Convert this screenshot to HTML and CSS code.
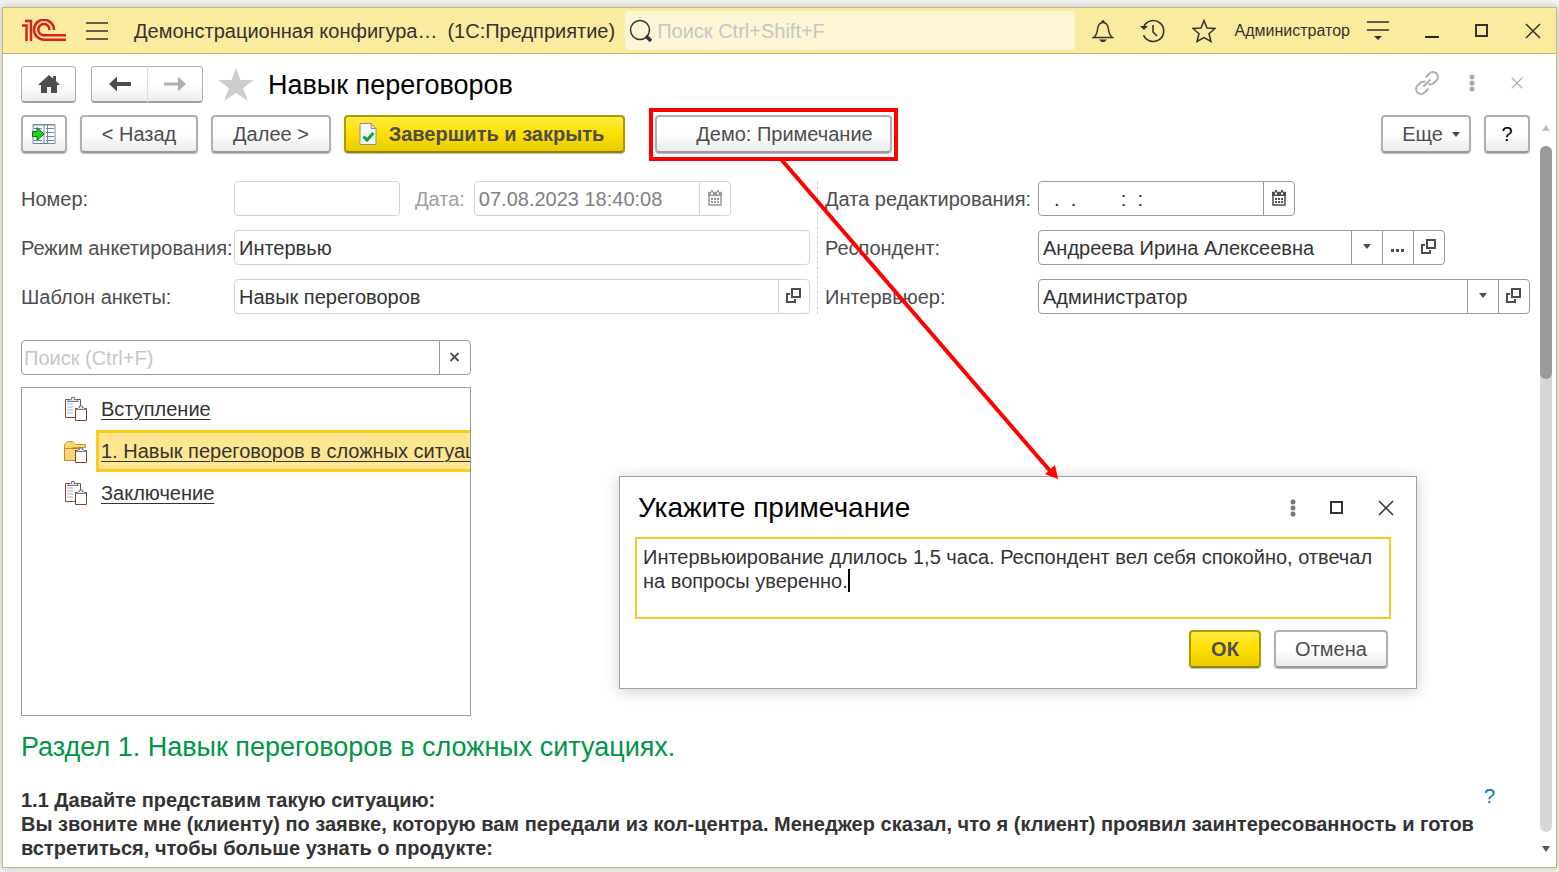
FILE: index.html
```html
<!DOCTYPE html>
<html lang="ru">
<head>
<meta charset="utf-8">
<title>Навык переговоров</title>
<link rel="stylesheet" href="styles.css">
</head>
<body>
<svg class="defs" width="0" height="0" aria-hidden="true">
  <defs>
    <symbol id="calendar" viewBox="0 0 14 16">
      <path d="M1 2.500h12V15H1z" fill="none" stroke="currentColor" stroke-width="1.500"/>
      <path d="M0 2h14v4H0zM3 0h2v3H3zM9 0h2v3H9z" fill="currentColor"/>
      <path d="M3 2.500h2v2H3zM9 2.500h2v2H9z" fill="#fff"/>
      <path d="M3 8h2v2H3zM6 8h2v2H6zM9 8h2v2H9zM3 11h2v2H3zM6 11h2v2H6zM9 11h2v2H9z" fill="currentColor"/>
    </symbol>
    <symbol id="open" viewBox="0 0 16 16">
      <path d="M6 1h8v8H6z" fill="none" stroke="currentColor" stroke-width="2"/>
      <path d="M4 6H1v8h8v-3" fill="none" stroke="currentColor" stroke-width="2"/>
    </symbol>
    <symbol id="caret" viewBox="0 0 8 5"><path d="M0 0h8L4 5z" fill="currentColor"/></symbol>
    <symbol id="cross" viewBox="0 0 16 16"><path d="M1 1l14 14M15 1L1 15" fill="none" stroke="currentColor" stroke-width="1.500"/></symbol>
    <symbol id="square" viewBox="0 0 14 14"><path d="M1 1h11v11H1z" fill="none" stroke="currentColor" stroke-width="2"/></symbol>
    <symbol id="dots" viewBox="0 0 6 18"><g fill="currentColor"><circle cx="3" cy="3" r="2.500"/><circle cx="3" cy="9" r="2.500"/><circle cx="3" cy="15" r="2.500"/></g></symbol>
    <symbol id="sheet" viewBox="0 0 24 24">
      <path d="M1.500 2.500h15v18h-15z" fill="#fdfdfd" stroke="#8a4a38"/>
      <path d="M3 7h6M3 10h6M3 13h6M3 16h6" stroke="#c4cad6" stroke-width="1.500"/>
      <path d="M3.500 4.500l2-2h2V.5h3v2h2l2 2z" fill="#dfe4ea" stroke="#747d8c"/>
      <path d="M11.500 11.500h11v12h-11z" fill="#fff" stroke="#87401f"/>
      <path d="M12.500 12.500l2-2h1V9h3v1.500h1l2 2z" fill="#dfe4ea" stroke="#747d8c"/>
    </symbol>
    <symbol id="folder" viewBox="0 0 24 24">
      <path d="M.5 21.500V5.500l3-3h5l3 3h10v3H9v13z" fill="#fbd764" stroke="#c79237"/>
      <path d="M.5 9.500h18v12H.5z" fill="#f8d77a" stroke="#c08a35"/>
      <path d="M11.500 11.500h11v12h-11z" fill="#fff" stroke="#87401f"/>
      <path d="M12.500 12.500l2-2h1V9h3v1.500h1l2 2z" fill="#dfe4ea" stroke="#747d8c"/>
    </symbol>
  </defs>
</svg>

<div class="window">
  <header class="titlebar">
    <svg class="logo" width="46" height="24" viewBox="0 0 46 24" role="img" aria-label="1С">
      <g fill="none" stroke="#d8201f" stroke-width="2.500">
        <path d="M1 6.500h4.500V22M4 2h6V22"/>
        <path d="M33 11A10 10 0 1 0 23 20.700H45"/>
        <path d="M28.500 11A5.600 5.600 0 1 0 23 16.300H45"/>
      </g>
    </svg>
    <button class="icon-btn menu" aria-label="Меню"><svg width="22" height="18" viewBox="0 0 22 18"><path d="M0 1h22M0 9h22M0 17h22" stroke="#333" stroke-width="1.500"/></svg></button>
    <span class="app-name">Демонстрационная конфигура…</span>
    <span class="app-kind">(1С:Предприятие)</span>
    <label class="global-search">
      <svg width="24" height="24" viewBox="0 0 24 24" fill="none" stroke="#333"><circle cx="11" cy="11" r="9.500" stroke-width="1.500"/><path d="M17 17l5 5" stroke-width="3.500"/></svg>
      <input type="text" placeholder="Поиск Ctrl+Shift+F" aria-label="Поиск">
    </label>
    <div class="title-tools">
      <button class="icon-btn" aria-label="Уведомления"><svg width="22" height="24" viewBox="0 0 22 24"><path d="M1.500 18.500c3-2 3.500-4 4-8C6 6 8 3.500 11 3.500S16 6 16.500 10.500c.5 4 1 6 4 8z" fill="none" stroke="#333" stroke-width="1.500"/><circle cx="11" cy="2.500" r="1.500" fill="#333"/><path d="M7 20.500h8l-2.500 2.500h-3z" fill="#333"/></svg></button>
      <button class="icon-btn" aria-label="История"><svg width="26" height="24" viewBox="0 0 26 24"><path d="M4 7A10.500 10.500 0 1 1 3.500 16M13 6v7l4 4" fill="none" stroke="#333" stroke-width="1.600"/><path d="M0 7h8L4 11z" fill="#333"/></svg></button>
      <button class="icon-btn" aria-label="Избранное"><svg width="24" height="24" viewBox="0 0 24 24"><path d="M12 1.500l3 7.500 8 .5-6 5.300 2 7.700-7-4-7 4 2-7.700-6-5.300 8-.5z" fill="none" stroke="#333" stroke-width="1.500"/></svg></button>
      <a class="user" href="#">Администратор</a>
      <button class="icon-btn" aria-label="Настройки"><svg width="22" height="20" viewBox="0 0 22 20"><path d="M0 1h22M0 9h22" stroke="#333" stroke-width="1.500"/><path d="M7 15h8l-4 4z" fill="#333"/></svg></button>
      <button class="icon-btn win" aria-label="Свернуть"><svg width="14" height="14" viewBox="0 0 14 14"><path d="M0 13h14" stroke="#222" stroke-width="2"/></svg></button>
      <button class="icon-btn win" aria-label="Развернуть"><svg width="14" height="14"><use href="#square"/></svg></button>
      <button class="icon-btn win" aria-label="Закрыть"><svg width="16" height="16"><use href="#cross"/></svg></button>
    </div>
  </header>

  <div class="page-head">
    <button class="nav-btn home" aria-label="Домой"><svg width="22" height="18" viewBox="0 0 22 18"><path d="M11 0L0 10h3v8h6v-6h4v6h6v-8h3l-4-4V1h-3v2.500z" fill="#4d4d4d"/></svg></button>
    <div class="nav-pair">
      <button class="nav-btn" aria-label="Назад"><svg width="22" height="16" viewBox="0 0 22 16"><path d="M0 8l8-7.500V6h14v4H8v5.500z" fill="#4d4d4d"/></svg></button>
      <button class="nav-btn" aria-label="Вперед"><svg width="22" height="16" viewBox="0 0 22 16"><path d="M22 8l-8-7.500V6.500H0v3h14v6z" fill="#b0b0b0"/></svg></button>
    </div>
    <svg class="fav" width="36" height="34" viewBox="0 0 36 34"><path d="M18 0l4.500 12H36L25 20l5 13-12-8-12 8 5-13L0 12h13.500z" fill="#cbcdcf"/></svg>
    <h1 class="title">Навык переговоров</h1>
    <div class="head-tools">
      <button class="icon-btn" aria-label="Ссылка"><svg width="24" height="24" viewBox="0 0 24 24" fill="none" stroke="#b0b0b0" stroke-width="2"><path d="M10.500 6.500l4-4c2-2 5-2 7 0s2 5 0 7l-4 3.500-4 .5M13.500 17.500l-4 4c-2 2-5 2-7 0s-2-5 0-7l4-3.500 4-.5M8.500 15.500l7-7"/></svg></button>
      <button class="icon-btn" aria-label="Еще"><svg width="6" height="18"><use href="#dots"/></svg></button>
      <button class="icon-btn close" aria-label="Закрыть форму"><svg width="12" height="12"><use href="#cross"/></svg></button>
    </div>
  </div>

  <div class="body">
    <main class="form">
      <div class="toolbar">
        <button class="btn square" aria-label="Показать в списке"><svg width="24" height="22" viewBox="0 0 24 22"><path d="M1 1.500h22v19H1z" fill="#fff" stroke="#7488a5"/><path d="M1 2h22M12 1v20M14 5.500h8M14 9.500h8M14 13.500h8M14 17.500h8M2 5.500h8M2 17.500h8M15.500 2v18" stroke="#7488a5"/><path d="M.5 8.500H5v-4l7 6.500-7 6.500v-4H.5z" fill="#1fd01f" stroke="#17691a"/></svg></button>
        <button class="btn back">&lt; Назад</button>
        <button class="btn next">Далее &gt;</button>
        <button class="btn primary finish"><svg width="18" height="22" viewBox="0 0 18 22"><path d="M1 .5h11l5 5v16H1z" fill="#f4faf7" stroke="#8b9098"/><path d="M12 .5v5h5z" fill="#ffe77a" stroke="#8b9098"/><path d="M4.500 13.500l3.500 3.500 6.500-7" fill="none" stroke="#0fa32a" stroke-width="3"/></svg>Завершить и закрыть</button>
        <button class="btn demo">Демо: Примечание</button>
        <button class="btn more">Еще<svg width="8" height="5"><use href="#caret"/></svg></button>
        <button class="btn square help">?</button>
      </div>

      <div class="fields">
        <div class="group">
          <div class="row">
            <label class="label" for="num">Номер:</label>
            <div class="field soft num"><input id="num" type="text" readonly></div>
            <label class="label-date" for="date">Дата:</label>
            <div class="field soft dim date"><input id="date" type="text" value="07.08.2023 18:40:08" readonly><button aria-label="Выбрать дату"><svg width="14" height="16"><use href="#calendar"/></svg></button></div>
          </div>
          <div class="row">
            <label class="label" for="mode">Режим анкетирования:</label>
            <div class="field soft"><input id="mode" type="text" value="Интервью" readonly></div>
          </div>
          <div class="row">
            <label class="label" for="tpl">Шаблон анкеты:</label>
            <div class="field soft"><input id="tpl" type="text" value="Навык переговоров" readonly><button aria-label="Открыть шаблон"><svg width="16" height="16"><use href="#open"/></svg></button></div>
          </div>
        </div>
        <div class="group right">
          <div class="row">
            <label class="label" for="edit">Дата редактирования:</label>
            <div class="field date"><input id="edit" type="text" value="  .  .        :  :"><button aria-label="Выбрать дату"><svg width="14" height="16"><use href="#calendar"/></svg></button></div>
          </div>
          <div class="row">
            <label class="label" for="resp">Респондент:</label>
            <div class="field resp"><input id="resp" type="text" value="Андреева Ирина Алексеевна"><button aria-label="Список"><svg width="8" height="5"><use href="#caret"/></svg></button><button class="ellipsis" aria-label="Выбрать"><svg width="14" height="3" viewBox="0 0 14 3"><path d="M0 0h3v3H0zM5 0h3v3H5zM10 0h3v3h-3z" fill="currentColor"/></svg></button><button aria-label="Открыть"><svg width="16" height="16"><use href="#open"/></svg></button></div>
          </div>
          <div class="row">
            <label class="label" for="inter">Интервьюер:</label>
            <div class="field"><input id="inter" type="text" value="Администратор"><button aria-label="Список"><svg width="8" height="5"><use href="#caret"/></svg></button><button aria-label="Открыть"><svg width="16" height="16"><use href="#open"/></svg></button></div>
          </div>
        </div>
      </div>

      <div class="sections">
        <div class="field search"><input type="text" placeholder="Поиск (Ctrl+F)" aria-label="Поиск по разделам"><button aria-label="Очистить"><svg width="10" height="10" viewBox="0 0 10 10"><path d="M.5 1l8 8M8.500 1l-8 8" stroke="currentColor" stroke-width="1.800"/></svg></button></div>
        <ul class="tree">
          <li><svg width="24" height="24"><use href="#sheet"/></svg><a href="#">Вступление</a></li>
          <li class="selected"><svg width="24" height="24"><use href="#folder"/></svg><a href="#">1. Навык переговоров в сложных ситуациях</a></li>
          <li><svg width="24" height="24"><use href="#sheet"/></svg><a href="#">Заключение</a></li>
        </ul>
      </div>

      <h2 class="section-title">Раздел 1. Навык переговоров в сложных ситуациях.</h2>
      <div class="question">
        <p>1.1 Давайте представим такую ситуацию:<br>Вы звоните мне (клиенту) по заявке, которую вам передали из кол-центра. Менеджер сказал, что я (клиент) проявил заинтересованность и готов встретиться, чтобы больше узнать о продукте:</p>
        <a href="#" class="hint">?</a>
      </div>
    </main>
    <div class="scroll" aria-hidden="true">
      <svg class="up" width="8" height="6" viewBox="0 0 8 6"><path d="M4 0l4 6H0z" fill="#c0c0c0"/></svg>
      <div class="track"><div class="thumb"></div></div>
      <svg width="8" height="6" viewBox="0 0 8 6"><path d="M0 0h8L4 6z" fill="#555"/></svg>
    </div>
  </div>
</div>

<section class="dialog" role="dialog" aria-labelledby="dlg-title">
  <div class="dialog-head">
    <h2 class="title" id="dlg-title">Укажите примечание</h2>
    <button class="icon-btn grey" aria-label="Еще"><svg width="6" height="18"><use href="#dots"/></svg></button>
    <button class="icon-btn" aria-label="Развернуть окно"><svg width="14" height="14"><use href="#square"/></svg></button>
    <button class="icon-btn" aria-label="Закрыть окно"><svg width="16" height="16"><use href="#cross"/></svg></button>
  </div>
  <div class="note">
    <textarea aria-label="Примечание">Интервьюирование длилось 1,5 часа. Респондент вел себя спокойно, отвечал на вопросы уверенно.</textarea>
    <span class="text-cursor"></span>
  </div>
  <div class="dialog-foot">
    <button class="btn primary ok">ОК</button>
    <button class="btn cancel">Отмена</button>
  </div>
</section>

<svg class="arrow" width="284" height="326" viewBox="0 0 284 326" aria-hidden="true">
  <path d="M4 2L275 316" stroke="#f00" stroke-width="4"/>
  <path d="M282 323l-13-5 10-9z" fill="#f00"/>
</svg>
</body>
</html>
```
FILE: styles.css
```css
* { box-sizing: border-box; }

body {
  margin: 0;
  padding: 7px 2px 4px;
  height: 100vh;
  overflow: hidden;
  position: relative;
  background: #f4f4f4;
  color: #333;
  font: 20px/24px "Liberation Sans", Arial, sans-serif;
}

.defs { position: absolute; }

button, input, textarea { font: inherit; color: inherit; }
button { padding: 0; cursor: pointer; }
svg { display: block; flex: none; }
h1, h2, p, ul { margin: 0; padding: 0; }

.window {
  height: 100%;
  display: flex;
  flex-direction: column;
  background: #fff;
  border: 1px solid #c8b966;
  box-shadow: 0 0 8px #bbb;
}

.icon-btn {
  display: flex;
  align-items: center;
  justify-content: center;
  border: 0;
  background: none;
}

/* Title bar */
.titlebar {
  display: flex;
  align-items: center;
  height: 46px;
  flex: none;
  padding: 0 15px 0 18px;
  background: #fbeb9e;
  border-bottom: 1px solid #c8b966;
  white-space: nowrap;
}
.menu { margin: 0 26px 0 19px; }
.app-kind { margin: 0 10px; }
.global-search {
  display: flex;
  align-items: center;
  gap: 4px;
  flex: 1;
  height: 39px;
  padding-left: 4px;
  border-radius: 4px;
  background: #fdf5d6;
}
.global-search input { flex: 1; min-width: 0; border: 0; padding: 0; background: none; outline: 0; }
::placeholder { color: #c6c6c6; opacity: 1; }
.title-tools { display: flex; align-items: center; gap: 26px; margin-left: 17px; }
.user { margin: 0 -9px 0 -7px; font-size: 16px; color: #333; text-decoration: none; }
.title-tools .win { margin-left: 10px; }

/* Form header */
.page-head { display: flex; align-items: center; padding: 12px 33px 0 18px; flex: none; }
.nav-btn {
  display: flex;
  align-items: center;
  justify-content: center;
  width: 55px;
  height: 37px;
  border: 1px solid #b0b0b0;
  border-bottom: 2px solid #a0a0a0;
  border-radius: 4px;
  background: linear-gradient(#fff 50%, #ececec);
}
.nav-pair { display: flex; margin: 0 15px; }
.nav-pair .nav-btn { width: 56px; }
.nav-pair .nav-btn:first-child { border-radius: 4px 0 0 4px; border-right: 0; }
.nav-pair .nav-btn:last-child { border-radius: 0 4px 4px 0; border-left-color: #ddd; }
.title { font-size: 27px; line-height: 32px; font-weight: 400; color: #000; }
.fav { margin-right: 14px; }
.head-tools { display: flex; align-items: center; gap: 30px; margin-left: auto; padding-bottom: 4px; }
.head-tools .icon-btn { color: #aaa; }
.head-tools .close { margin-left: 6px; }

.body { flex: 1; min-height: 0; display: flex; padding: 4px 4px 0 17px; }
.form { flex: 1; min-width: 0; overflow: hidden; padding: 8px 0 0 1px; }

/* Buttons */
.toolbar { display: flex; gap: 13px; }
.btn {
  display: flex;
  align-items: center;
  justify-content: center;
  height: 38px;
  border: 2px solid #b0b0b0;
  border-bottom-color: #9a9a9a;
  border-radius: 4px;
  background: linear-gradient(#fff 50%, #ebebeb);
  box-shadow: 0 1px 1px #bbb;
  color: #4d4d4d;
  white-space: nowrap;
}
.primary {
  border-color: #ad9a00;
  border-bottom-color: #948300;
  background: linear-gradient(#ffea40, #ffe000 50%, #e8cc00);
  font-weight: 700;
}
.square { width: 46px; }
.back { width: 118px; }
.next { width: 120px; }
.finish { width: 281px; gap: 12px; padding-right: 6px; }
.demo { position: relative; width: 237px; margin-left: 17px; padding-left: 22px; }
.demo::after {
  content: "";
  position: absolute;
  inset: -9px -8px -10px;
  border: 4px solid #f00;
}
.more { width: 90px; margin-left: auto; padding-left: 10px; gap: 9px; }
.help { color: #000; }

/* Fields */
.fields { display: grid; grid-template-columns: 789fr 713fr; gap: 7px; margin-top: 28px; }
.group { display: grid; gap: 14px; min-width: 0; }
.right { border-left: 1px dashed #d0d0d0; padding-left: 7px; }
.row { display: flex; align-items: center; }
.label { width: 213px; flex: none; color: #4d4d4d; white-space: nowrap; }
.label-date { margin: 0 9px 0 15px; color: #a0a0a0; }
.field {
  display: flex;
  flex: 1;
  min-width: 0;
  height: 35px;
  border: 1px solid #9a9a9a;
  border-radius: 4px;
  background: #fff;
  color: #4d4d4d;
}
.field input { flex: 1; min-width: 0; border: 0; padding: 0 4px; background: none; outline: 0; color: #333; }
.field button {
  display: flex;
  align-items: center;
  justify-content: center;
  width: 31px;
  padding-bottom: 2px;
  border: 0;
  border-left: 1px solid #9a9a9a;
  background: none;
}
.field.soft, .soft button { border-color: #d4d4d4; }
.dim input { color: #808080; }
.dim button { color: #9a9a9a; }
.num { flex: 0 1 166px; }
.date { flex: 0 1 257px; }
.resp { flex: 0 1 407px; }
.field .ellipsis { padding: 5px 0 0; }

/* Section list */
.sections { width: 450px; margin-top: 26px; display: grid; gap: 12px; }
.search input { padding: 0 2px; }
.tree { height: 329px; border: 1px solid #9a9a9a; list-style: none; overflow: hidden; }
.tree li { display: flex; align-items: center; height: 42px; padding-left: 42px; }
.tree a {
  display: flex;
  align-items: center;
  flex: none;
  height: 42px;
  min-width: 376px;
  margin-left: 8px;
  padding-left: 2px;
  border: 3px solid transparent;
  color: #333;
  text-underline-offset: 3px;
  text-decoration-thickness: 1px;
}
.tree .selected a { border-color: #facb1e; background: #fee58f; }

.section-title { margin-top: 15px; font-size: 27px; line-height: 32px; font-weight: 400; color: #009646; }
.question { display: flex; align-items: flex-start; justify-content: space-between; margin-top: 25px; padding-right: 35px; font-weight: 700; }
.question p { flex: 1; margin-right: 8px; }
.hint { margin-top: -4px; font-weight: 400; color: #0070ba; text-decoration: none; }

/* Scroll bar */
.scroll { display: flex; flex-direction: column; align-items: center; width: 12px; margin-left: 10px; padding: 18px 0 15px; }
.track { flex: 1; width: 12px; margin: 15px 0 14px; border-radius: 6px; background: #d6d6d6; }
.thumb { height: 34%; border-radius: 6px; background: #9a9a9a; }

/* Note dialog */
.dialog {
  position: absolute;
  left: 619px;
  top: 476px;
  width: 798px;
  padding: 15px 25px 20px 15px;
  border: 1px solid #a0a0a0;
  background: #fff;
  box-shadow: 0 2px 14px #ccc;
}
.dialog-head { display: flex; align-items: center; gap: 34px; margin: 0 -3px 13px 3px; }
.dialog-head .title { margin-right: auto; font-size: 28px; }
.grey { color: #777; }
.note { position: relative; }
.note textarea {
  display: block;
  width: 100%;
  height: 82px;
  padding: 6px;
  border: 2px solid #f7c920;
  outline: 0;
  resize: none;
  line-height: 24px;
  color: #333;
}
.text-cursor { position: absolute; left: 213px; top: 32px; width: 2px; height: 23px; background: #000; }
.dialog-foot { display: flex; justify-content: flex-end; gap: 13px; margin-top: 11px; padding-right: 3px; }
.ok { width: 72px; }
.cancel { width: 114px; }

.arrow { position: absolute; left: 776px; top: 156px; pointer-events: none; }
```
